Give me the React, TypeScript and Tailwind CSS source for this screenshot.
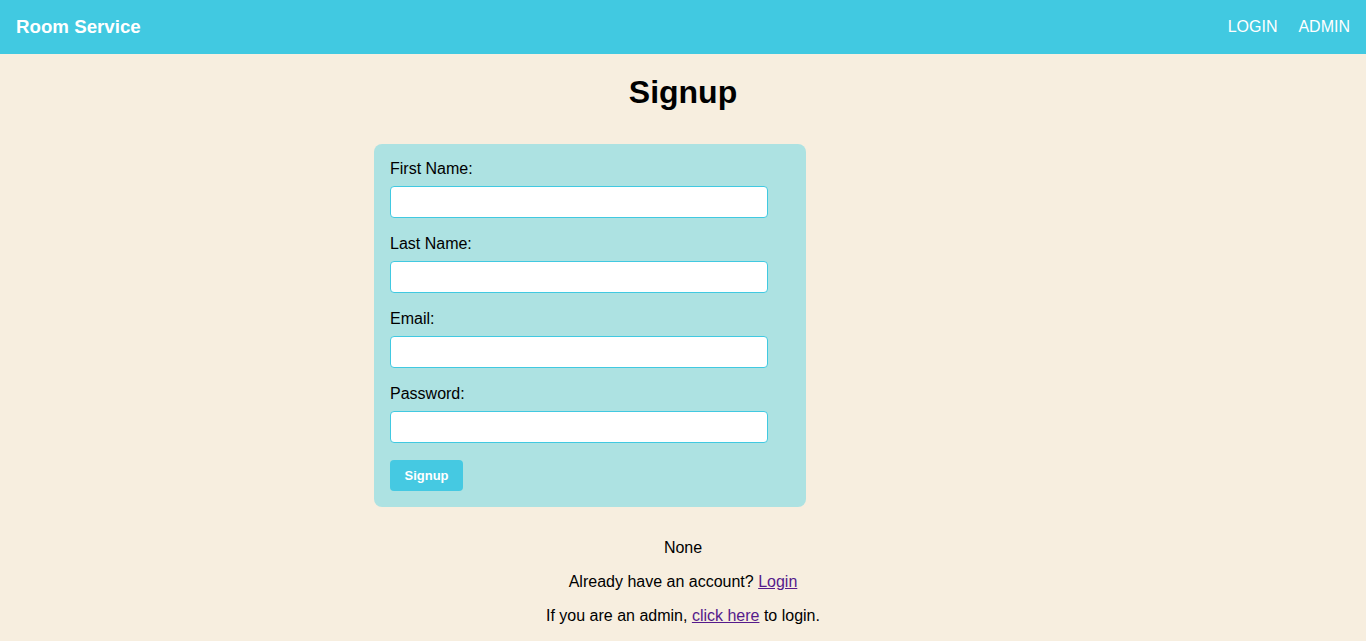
import React from "react";

export default function App() {
  const fields = ["First Name:", "Last Name:", "Email:", "Password:"];
  return (
    <div className="min-h-[641px] bg-[#f7eedf] text-black" style={{ fontFamily: '"Liberation Sans", Arial, sans-serif' }}>
      <header className="h-[54px] bg-[#41c9e1] flex items-center justify-between px-4 text-white">
        <h3 className="text-[18.72px] font-bold">Room Service</h3>
        <nav className="flex gap-[21px] text-base">
          <a>LOGIN</a>
          <a>ADMIN</a>
        </nav>
      </header>
      <h1 className="text-[32px] font-bold text-center mt-[20px] mb-[33px] leading-[37px]">Signup</h1>
      <div className="w-[618px] mx-auto">
        <form className="w-[432px] bg-[#ade2e2] rounded-[8px] p-4 text-base">
          {fields.map((f) => (
            <div key={f} className="mb-[17px]">
              <label className="block leading-[18px]">{f}</label>
              <input
                type={f === "Password:" ? "password" : "text"}
                className="mt-2 block w-[378px] h-[32px] bg-white border border-[#41c9e1] rounded-[4px] outline-none"
              />
            </div>
          ))}
          <button type="button" className="block w-[73px] h-[31px] bg-[#45c9e2] text-white text-[13px] font-bold rounded-[4px]">
            Signup
          </button>
        </form>
      </div>
      <div className="text-center text-base mt-[32px]">
        <p className="leading-[18px]">None</p>
        <p className="leading-[18px] mt-4">
          Already have an account? <a className="text-[#551a8b] underline">Login</a>
        </p>
        <p className="leading-[18px] mt-4 pb-[8px]">
          If you are an admin, <a className="text-[#551a8b] underline">click here</a> to login.
        </p>
      </div>
    </div>
  );
}
